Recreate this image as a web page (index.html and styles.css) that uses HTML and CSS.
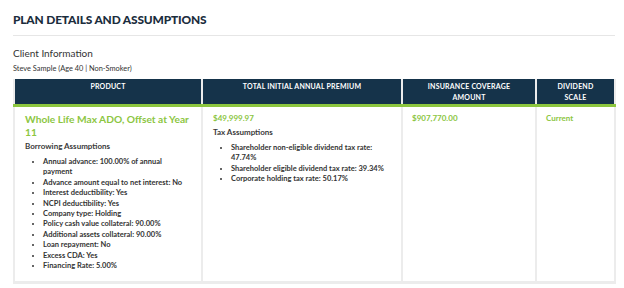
FILE: index.html
```
<!DOCTYPE html>
<html>
<head>
<meta charset="utf-8">
<link rel="stylesheet" href="styles.css">
</head>
<body>
<div class="page">
  <h1 class="title">PLAN DETAILS AND ASSUMPTIONS</h1>
  <h2 class="subtitle">Client Information</h2>
  <p class="client">Steve Sample (Age 40 | Non-Smoker)</p>
  <div class="table">
    <div class="head">
      <div class="th">PRODUCT</div>
      <div class="th">TOTAL INITIAL ANNUAL PREMIUM</div>
      <div class="th">INSURANCE COVERAGE<br>AMOUNT</div>
      <div class="th">DIVIDEND<br>SCALE</div>
    </div>
    <div class="body">
      <div class="td">
        <div class="product">Whole Life Max ADO, Offset at Year 11</div>
        <div class="label">Borrowing Assumptions</div>
        <ul class="list">
          <li>Annual advance: 100.00% of annual payment</li>
          <li>Advance amount equal to net interest: No</li>
          <li>Interest deductibility: Yes</li>
          <li>NCPI deductibility: Yes</li>
          <li>Company type: Holding</li>
          <li>Policy cash value collateral: 90.00%</li>
          <li>Additional assets collateral: 90.00%</li>
          <li>Loan repayment: No</li>
          <li>Excess CDA: Yes</li>
          <li>Financing Rate: 5.00%</li>
        </ul>
      </div>
      <div class="td">
        <div class="value">$49,999.97</div>
        <div class="label">Tax Assumptions</div>
        <ul class="list">
          <li>Shareholder non-eligible dividend tax rate: 47.74%</li>
          <li>Shareholder eligible dividend tax rate: 39.34%</li>
          <li>Corporate holding tax rate: 50.17%</li>
        </ul>
      </div>
      <div class="td narrow">
        <div class="value">$907,770.00</div>
      </div>
      <div class="td narrow">
        <div class="value">Current</div>
      </div>
    </div>
  </div>
</div>
</body>
</html>
```

FILE: styles.css
```
* { box-sizing: border-box; }
html, body { margin: 0; padding: 0; background: #fff; }
body { font-family: Lato, "Liberation Sans", sans-serif; color: #333; }
.page { padding: 13px 8px 0 13px; }
.title {
  margin: 0;
  font-size: 11.9px;
  font-weight: 900;
  color: #1b2d3d;
  letter-spacing: -0.15px;
  line-height: 14px;
  padding-bottom: 8px;
  width: 602px;
  border-bottom: 1px solid #e6e6e6;
}
.subtitle {
  margin: 11px 0 0;
  font-size: 10px;
  font-weight: 400;
  color: #333;
  line-height: 12px;
}
.client {
  margin: 5px 0 0;
  font-size: 7.4px;
  line-height: 10px;
  color: #333;
}
.table {
  margin-top: 5px;
  width: 603px;
  background: #ececec;
  padding: 0 3px 3px 2px;
}
.head, .body {
  display: grid;
  grid-template-columns: 186px 198px 132px 77px;
  column-gap: 2px;
}
.head {
  margin: 0 -3px 0 -2px;
  padding: 0 3px 0 2px;
  border-bottom: 3px solid #8cc63f;
  background: #ececec;
}
.th {
  background: #15334a;
  color: #fff;
  font-weight: 700;
  font-size: 7px;
  line-height: 11px;
  text-align: center;
  height: 25px;
  padding-top: 2px;
  letter-spacing: 0.2px;
}
.body { min-height: 172px; }
.td {
  background: #fff;
  padding: 6px 10px 10px 10px;
}
.td.narrow { padding-left: 9px; }
.product {
  color: #8cc63f;
  font-weight: 700;
  font-size: 10.2px;
  line-height: 12.5px;
}
.value {
  color: #8cc63f;
  font-weight: 700;
  font-size: 8px;
  line-height: 11px;
  margin-bottom: 2px;
}
.label {
  margin-top: 2.5px;
  font-weight: 700;
  font-size: 8px;
  line-height: 11px;
  color: #3a3a3a;
}
.list {
  margin: 5.5px 0 0;
  padding-left: 18px;
  font-size: 7.5px;
  font-weight: 700;
  line-height: 10.4px;
  color: #333;
}
```
